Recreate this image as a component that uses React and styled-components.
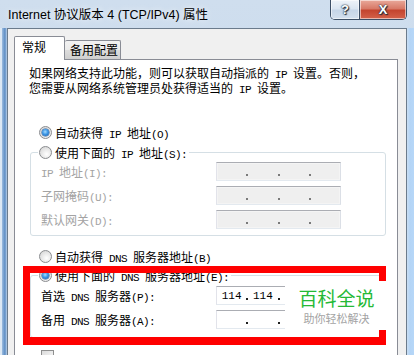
import React from "react";
import styled, { createGlobalStyle } from "styled-components";

const Global = createGlobalStyle`
  html, body { margin: 0; padding: 0; background: #fff; }
  body { font-family: "Noto Sans CJK SC", sans-serif; }
`;

const Screen = styled.div`
  position: relative;
  width: 414px;
  height: 355px;
  overflow: hidden;
  display: flex;
  flex-direction: column;
  background: linear-gradient(180deg, #cfdeee 0%, #c3d5e9 100%);
`;

const TitleBar = styled.div`
  height: 28px;
  flex: none;
  display: flex;
  align-items: flex-start;
  padding: 0 7px 0 8px;
  box-sizing: border-box;
`;

const TitleText = styled.div`
  font-family: "Liberation Sans", "Noto Sans CJK SC", sans-serif;
  font-size: 12.5px;
  line-height: 14px;
  margin-top: 8px;
  color: #000;
  white-space: nowrap;
  text-shadow: 0 0 6px rgba(255, 255, 255, 0.9);
`;

const Controls = styled.div`
  margin-left: auto;
  display: flex;
  height: 20px;
  border: 1px solid #3c4f66;
  border-top: none;
  border-radius: 0 0 5px 5px;
  overflow: hidden;
  box-sizing: border-box;
`;

const CtrlButton = styled.div`
  width: ${(p) => p.$w}px;
  height: 100%;
  display: flex;
  align-items: center;
  justify-content: center;
  font-family: "Liberation Sans", sans-serif;
  font-weight: bold;
  font-size: 13px;
  color: #fff;
  text-shadow: 0 0 1px #1d2a3a, 0 0 2px #1d2a3a, 1px 1px 1px #1d2a3a;
  background: ${(p) =>
    p.$close
      ? "linear-gradient(180deg, #e9a99b 0%, #d87a68 45%, #c4452f 55%, #d4624a 100%)"
      : "linear-gradient(180deg, #eef3f9 0%, #dbe6f2 45%, #c6d6e8 55%, #d3e0ee 100%)"};
  border-left: ${(p) => (p.$close ? "1px solid #3c4f66" : "none")};
  box-shadow: inset 0 0 0 1px rgba(255, 255, 255, 0.55);
`;

const FrameRow = styled.div`
  flex: 1;
  display: flex;
  min-height: 0;
`;

const Edge = styled.div`
  width: 7px;
  flex: none;
  background: ${(p) =>
    p.$side === "left"
      ? "linear-gradient(90deg, #dce8f4 0px, #dce8f4 2px, #9dbde0 2px, #5d8dc4 5px, #8fb2da 6px, #b9cfe6 7px)"
      : "linear-gradient(90deg, #c9def3 0px, #b3d4f6 3px, #b6d7f8 7px)"};
`;

const Body = styled.div`
  flex: 1;
  display: flex;
  flex-direction: column;
  background: #f0f0f0;
  border: 1px solid #6b7b8c;
  border-bottom: none;
  padding: 7px 8px 0 6px;
  min-width: 0;
`;

const TabRow = styled.div`
  display: flex;
  align-items: flex-end;
  height: 23px;
  flex: none;
`;

const Tab = styled.div`
  box-sizing: border-box;
  position: relative;
  z-index: ${(p) => (p.$active ? 2 : 1)};
  width: ${(p) => p.$w}px;
  height: ${(p) => (p.$active ? 24 : 19)}px;
  margin-bottom: ${(p) => (p.$active ? -1 : 0)}px;
  padding-left: ${(p) => p.$pl}px;
  padding-top: ${(p) => (p.$active ? 2 : 1)}px;
  border: 1px solid #898c95;
  border-bottom: none;
  border-left: ${(p) => (p.$noLeft ? "none" : "1px solid #898c95")};
  border-radius: 2px 2px 0 0;
  background: ${(p) =>
    p.$active ? "#ffffff" : "linear-gradient(180deg, #f2f2f2 0%, #ebebeb 50%, #dddddd 51%, #cfcfcf 100%)"};
  font-size: 12px;
  line-height: 16px;
  color: #000;
  white-space: nowrap;
`;

const Panel = styled.div`
  flex: 1;
  background: #fff;
  border: 1px solid #898c95;
  border-bottom: none;
  padding-top: 5px;
  display: flex;
  flex-direction: column;
  font-size: 12px;
  color: #000;
`;

const Intro = styled.div`
  padding-left: 14px;
  line-height: 15px;
`;

const Line = styled.div`
  white-space: pre;
  height: 15px;
`;

const Text = styled.span`
  white-space: pre;
`;

const Half = styled.span`
  font-family: "Liberation Mono", monospace;
  font-size: 11px;
  letter-spacing: -0.6px;
`;

function Mixed({ text }) {
  const parts = text.split(/([\u0000-\u00ff]+)/);
  return (
    <Text>
      {parts.map((p, i) =>
        i % 2 === 1 ? <Half key={i}>{p}</Half> : <React.Fragment key={i}>{p}</React.Fragment>
      )}
    </Text>
  );
}

const RadioRow = styled.div`
  display: flex;
  align-items: center;
  height: 16px;
  margin-top: ${(p) => p.$mt || 0}px;
  margin-left: 24px;
  white-space: nowrap;
`;

const RadioDot = styled.span`
  position: relative;
  flex: none;
  width: 13px;
  height: 13px;
  box-sizing: border-box;
  border-radius: 50%;
  border: 1px solid #8a8c8f;
  background: radial-gradient(circle at 60% 65%, #ffffff 0%, #eaeaea 45%, #cfcfcf 100%);
  margin-right: 3px;
  &::after {
    content: "";
    display: ${(p) => (p.$on ? "block" : "none")};
    position: absolute;
    left: 2px;
    top: 2px;
    width: 7px;
    height: 7px;
    border-radius: 50%;
    background: radial-gradient(circle at 45% 40%, #a6dcff 0%, #3d97e6 45%, #0c4f9e 100%);
    box-shadow: 0 0 0 0.5px #2a5a94;
  }
`;

const Group = styled.fieldset`
  margin: ${(p) => p.$mt}px 11px 0 15px;
  padding: 3px 0 ${(p) => p.$pb}px 10px;
  border: 1px solid #d5dfe5;
  border-radius: 3px;
  min-width: 0;
`;

const Legend = styled.legend`
  margin-left: -3px;
  padding: 0 2px 0 1px;
  height: 16px;
  display: flex;
  align-items: center;
  white-space: nowrap;
  color: #000;
`;

const Fields = styled.div`
  display: grid;
  grid-template-columns: 175px 125px;
  grid-auto-rows: 19px;
  row-gap: 5px;
  margin-top: ${(p) => p.$mt || 0}px;
`;

const FieldLabel = styled.div`
  display: flex;
  align-items: center;
  white-space: nowrap;
  color: ${(p) => (p.$disabled ? "#a3a3a3" : "#000")};
`;

const IpBox = styled.div`
  box-sizing: border-box;
  display: flex;
  align-items: stretch;
  border: 1px solid;
  border-color: #abadb3 #dbdfe6 #e3e9ef #e2e3ea;
  background: ${(p) => (p.$disabled ? "#efefef" : "#fff")};
  box-shadow: inset 0 0 0 1px ${(p) => (p.$disabled ? "#f4f4f4" : "#fff")};
`;

const Seg = styled.div`
  flex: 1;
  display: flex;
  align-items: center;
  justify-content: center;
  font-family: "Liberation Mono", monospace;
  font-size: 11px;
  color: #000;
  padding-top: 1px;
`;

const Dot = styled.div`
  flex: none;
  align-self: flex-end;
  width: 2px;
  height: 2px;
  margin-bottom: 4px;
  background: ${(p) => (p.$disabled ? "#7a7a7a" : "#202020")};
`;

function IpInput({ values = ["", "", "", ""], disabled }) {
  return (
    <IpBox $disabled={disabled}>
      <Seg>{values[0]}</Seg>
      <Dot $disabled={disabled} />
      <Seg>{values[1]}</Seg>
      <Dot $disabled={disabled} />
      <Seg>{values[2]}</Seg>
      <Dot $disabled={disabled} />
      <Seg>{values[3]}</Seg>
    </IpBox>
  );
}

const CheckRow = styled.div`
  margin: 12px 0 0 26px;
  display: flex;
`;

const CheckBox = styled.span`
  width: 13px;
  height: 13px;
  box-sizing: border-box;
  border: 1px solid #8e8f8f;
  background: linear-gradient(135deg, #dcdcdc, #fbfbfb);
`;

const Highlight = styled.div`
  position: absolute;
  left: 23px;
  top: 266px;
  width: 363px;
  height: 79px;
  box-sizing: border-box;
  border: 7px solid #ff0000;
  border-bottom-width: 8px;
  pointer-events: none;
`;

const Watermark = styled.div`
  position: absolute;
  left: 285px;
  top: 281px;
  width: 103px;
  height: 49px;
  background: #fff;
  display: flex;
  flex-direction: column;
  align-items: center;
  font-family: "Noto Sans CJK SC", sans-serif;
`;

const MarkMain = styled.div`
  margin-top: 5px;
  font-size: 19px;
  line-height: 24px;
  color: #25b936;
`;

const MarkSub = styled.div`
  margin-top: 1px;
  font-size: 11px;
  line-height: 14px;
  color: #a3a3a3;
`;

export default function App() {
  return (
    <>
      <Global />
      <Screen>
        <TitleBar>
          <TitleText>Internet 协议版本 4 (TCP/IPv4) 属性</TitleText>
          <Controls>
            <CtrlButton $w={28}>?</CtrlButton>
            <CtrlButton $w={46} $close>
              X
            </CtrlButton>
          </Controls>
        </TitleBar>
        <FrameRow>
          <Edge $side="left" />
          <Body>
            <TabRow>
              <Tab $active $w={51} $pl={7}>
                常规
              </Tab>
              <Tab $w={56} $pl={5} $noLeft>
                备用配置
              </Tab>
            </TabRow>
            <Panel>
              <Intro>
                <Line>
                  <Mixed text="如果网络支持此功能，则可以获取自动指派的 IP 设置。否则，" />
                </Line>
                <Line>
                  <Mixed text="您需要从网络系统管理员处获得适当的 IP 设置。" />
                </Line>
              </Intro>
              <RadioRow $mt={29}>
                <RadioDot $on />
                <Mixed text="自动获得 IP 地址(O)" />
              </RadioRow>
              <Group $mt={4} $pb={6}>
                <Legend>
                  <RadioDot />
                  <Mixed text="使用下面的 IP 地址(S):" />
                </Legend>
                <Fields $mt={-1}>
                  <FieldLabel $disabled>
                    <Mixed text="IP 地址(I):" />
                  </FieldLabel>
                  <IpInput disabled />
                  <FieldLabel $disabled>
                    <Mixed text="子网掩码(U):" />
                  </FieldLabel>
                  <IpInput disabled />
                  <FieldLabel $disabled>
                    <Mixed text="默认网关(D):" />
                  </FieldLabel>
                  <IpInput disabled />
                </Fields>
              </Group>
              <RadioRow $mt={12}>
                <RadioDot />
                <Mixed text="自动获得 DNS 服务器地址(B)" />
              </RadioRow>
              <Group $mt={3} $pb={8}>
                <Legend>
                  <RadioDot $on />
                  <Mixed text="使用下面的 DNS 服务器地址(E):" />
                </Legend>
                <Fields>
                  <FieldLabel>
                    <Mixed text="首选 DNS 服务器(P):" />
                  </FieldLabel>
                  <IpInput values={["114", "114", "", ""]} />
                  <FieldLabel>
                    <Mixed text="备用 DNS 服务器(A):" />
                  </FieldLabel>
                  <IpInput />
                </Fields>
              </Group>
              <CheckRow>
                <CheckBox />
              </CheckRow>
            </Panel>
          </Body>
          <Edge $side="right" />
        </FrameRow>
        <Highlight />
        <Watermark>
          <MarkMain>百科全说</MarkMain>
          <MarkSub>助你轻松解决</MarkSub>
        </Watermark>
      </Screen>
    </>
  );
}
